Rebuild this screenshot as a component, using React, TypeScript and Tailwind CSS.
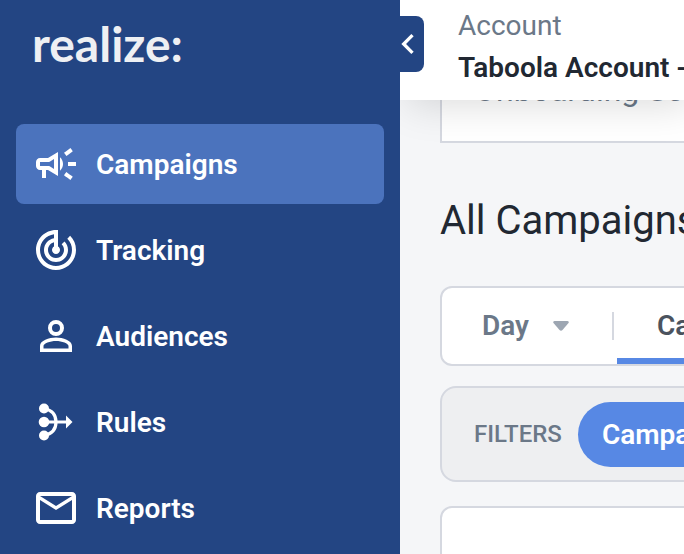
import React from 'react';
import { MdChevronLeft, MdMailOutline, MdOutlineCampaign, MdTrackChanges } from 'react-icons/md';

const AudienceIcon: React.FC<{ className?: string }> = ({ className }) => (
  <svg viewBox="0 0 48 48" className={className} fill="currentColor" aria-hidden="true">
    <circle cx="24" cy="16" r="6" fill="none" stroke="currentColor" strokeWidth="4" />
    <path
      fillRule="evenodd"
      d="M8 40V34C8 28.500 17 25.500 24 25.500S40 28.500 40 34V40ZM11.500 36.500H36.500V34C36.500 31.500 30 29 24 29S11.500 31.500 11.500 34Z"
    />
  </svg>
);

const RulesIcon: React.FC<{ className?: string }> = ({ className }) => (
  <svg viewBox="0 0 48 48" className={className} fill="none" stroke="currentColor" aria-hidden="true">
    <circle cx="12" cy="10.500" r="5" fill="currentColor" stroke="none" />
    <circle cx="12" cy="24" r="5.300" fill="currentColor" stroke="none" />
    <circle cx="12" cy="37.500" r="5" fill="currentColor" stroke="none" />
    <path d="M12 10.500C20 12 24 17 24 24C24 31 20 36 12 37.500" strokeWidth="3.200" />
    <path d="M12 24H35" strokeWidth="3" />
    <path d="M34 17.500L40.500 24L34 30.500Z" fill="currentColor" stroke="none" />
  </svg>
);

const navItems = [
  { label: 'Campaigns', icon: MdOutlineCampaign, active: true },
  { label: 'Tracking', icon: MdTrackChanges },
  { label: 'Audiences', icon: AudienceIcon },
  { label: 'Rules', icon: RulesIcon },
  { label: 'Reports', icon: MdMailOutline },
];

const Sidebar: React.FC = () => (
  <aside className="relative z-20 w-100 shrink-0 bg-[#234583] px-4 text-white">
    <div className="h-[124px] pt-3.5 pl-4">
      <a href="#" className="block font-['Lato',sans-serif] text-5xl leading-[60px] font-bold text-[#eef0f3]">
        realize:
      </a>
    </div>
    <nav className="flex flex-col gap-1.5">
      {navItems.map(({ label, icon: Icon, active }) => (
        <a
          key={label}
          href="#"
          aria-current={active ? 'page' : undefined}
          className={`flex h-20 items-center gap-4 rounded-lg px-4 text-[28px] font-semibold ${active ? 'bg-[#4b73bd]' : ''}`}
        >
          <Icon className="size-12 shrink-0" />
          <span className="pt-0.5">{label}</span>
        </a>
      ))}
    </nav>
    <button
      type="button"
      aria-label="Collapse menu"
      className="absolute top-4 -right-6 flex h-14 w-8 items-center justify-center rounded-r-lg bg-[#234583]"
    >
      <MdChevronLeft className="size-10 shrink-0" />
    </button>
  </aside>
);

const Header: React.FC = () => (
  <header className="relative z-10 h-[100px] shrink-0 bg-white pt-[5px] pl-[58px] text-[28px] leading-[42px] whitespace-nowrap shadow-[8px_4px_40px_rgba(0,0,0,0.15)]">
    <p className="text-[#6b7888]">Account</p>
    <p className="font-semibold text-[#212832]">Taboola Account - Main</p>
  </header>
);

const Toolbar: React.FC = () => (
  <div className="flex h-20 items-center overflow-hidden rounded-xl border-2 border-[#d5d8e0] bg-white text-[28px] font-semibold">
    <div className="relative ml-10 shrink-0 text-[#6b7888]">
      <select aria-label="Group by" className="block w-[87px] appearance-none bg-transparent">
        <option>Day</option>
      </select>
      <svg viewBox="0 0 16 10" className="pointer-events-none absolute top-4 right-0 w-4 fill-[#9da6b2]" aria-hidden="true">
        <path d="M1.500 0H14.500Q16.500 0.500 15.500 2L9.500 9Q8 10.500 6.500 9L0.500 2Q-0.500 0.500 1.500 0Z" />
      </svg>
    </div>
    <span className="ml-[43px] h-7 w-0.5 shrink-0 bg-[#d5d8e0]" />
    <button type="button" className="ml-[3px] h-full shrink-0 border-y-6 border-t-transparent border-b-[#5788e4] px-10 text-[#4b535e]">
      Campaigns
    </button>
  </div>
);

const Filters: React.FC = () => (
  <div className="flex h-24 items-center gap-4 overflow-hidden rounded-2xl border-2 border-[#d5d8e0] bg-[#eeeff1] pl-8">
    <span className="text-2xl font-medium text-[#6b7888]">FILTERS</span>
    <button type="button" className="h-[65px] shrink-0 rounded-full bg-[#5788e4] px-6 pt-0.5 text-[28px] font-semibold text-white">
      Campaigns
    </button>
  </div>
);

const App: React.FC = () => {
  return (
    <div className="flex h-screen overflow-hidden bg-[#f5f6f8] font-['Roboto',sans-serif]">
      <Sidebar />
      <div className="flex min-w-0 flex-1 flex-col overflow-hidden">
        <Header />
        <main className="-mt-10 min-h-0 flex-1 overflow-hidden pl-10 whitespace-nowrap">
          <div className="-mr-8 h-[83px] border-2 border-[#d5d8e0] bg-white pt-2 pl-8 text-[32px] leading-10 text-[#6b7888]">
            Onboarding Setup
          </div>
          <h1 className="mt-12 mb-[35px] text-[40px] leading-[60px] text-[#212832]">All Campaigns</h1>
          <div className="-mr-8 flex flex-col gap-5">
            <Toolbar />
            <Filters />
          </div>
          <section aria-label="Campaign list" className="mt-6 -mr-8 h-80 rounded-xl border-2 border-[#d5d8e0] bg-white" />
        </main>
      </div>
    </div>
  );
};

export default App;
